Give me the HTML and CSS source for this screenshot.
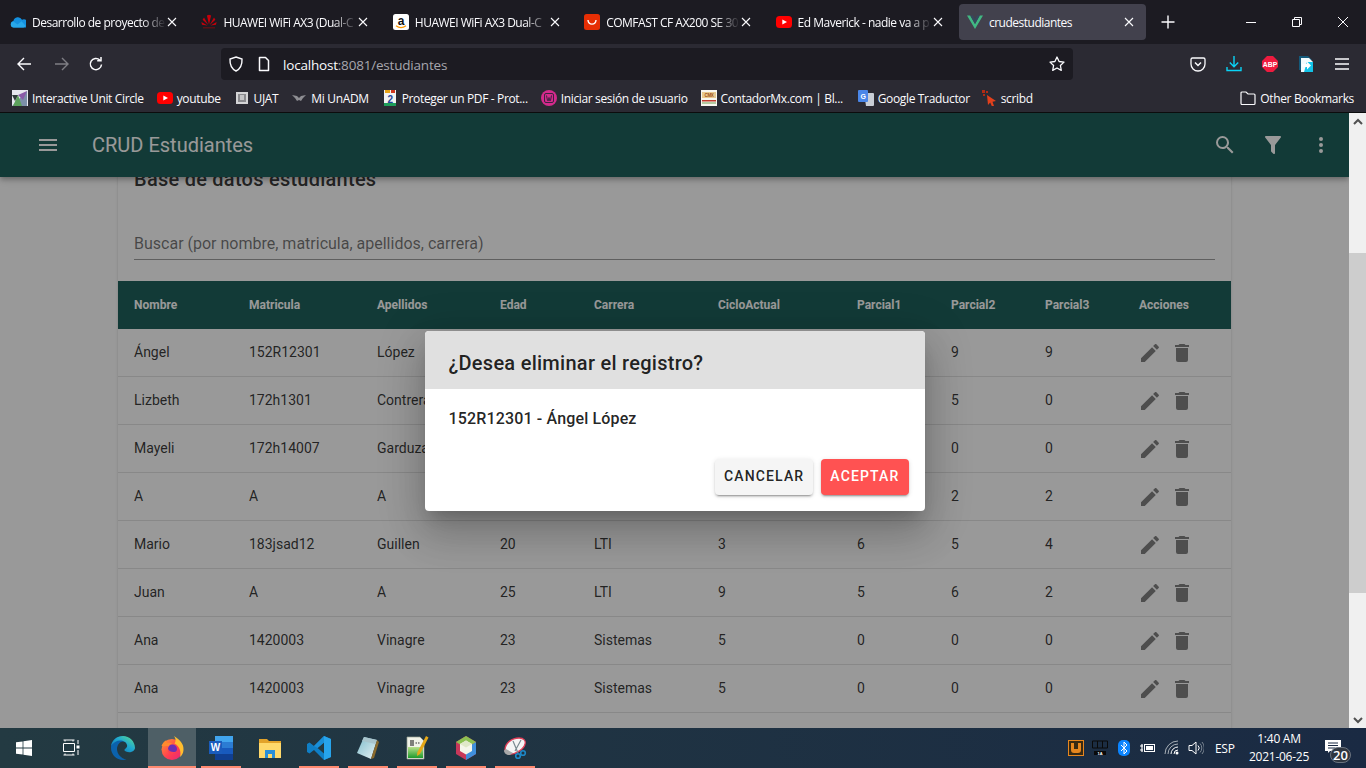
FILE: index.html
```html
<!DOCTYPE html>
<html lang="en">
<head>
  <meta charset="UTF-8" />
  <meta name="viewport" content="width=device-width, initial-scale=1.0" />
  <title>crudestudiantes</title>
  <link rel="stylesheet" href="styles.css">
</head>
<body>
  <svg class="sprites" aria-hidden="true">
    <defs>
      <linearGradient id="g-edge" x1="1" y1="0" x2="0" y2="1"><stop offset="0" stop-color="#5fe08a"/><stop offset=".45" stop-color="#1fa8d0"/><stop offset="1" stop-color="#0b62ad"/></linearGradient>
      <linearGradient id="g-fox" x1="0" y1="0" x2="1" y2="1"><stop offset="0" stop-color="#ff9a2e"/><stop offset=".55" stop-color="#ff3f50"/><stop offset="1" stop-color="#e5217f"/></linearGradient>
      <linearGradient id="g-pad" x1="0" y1="0" x2="1" y2="1"><stop offset="0" stop-color="#7fbccc"/><stop offset="1" stop-color="#e8f2f4"/></linearGradient>
      <linearGradient id="g-npp" x1="0" y1="0" x2="0" y2="1"><stop offset="0" stop-color="#b8e08a"/><stop offset="1" stop-color="#1e9a2c"/></linearGradient>
    </defs>
    <symbol id="i-menu" viewBox="0 0 24 24"><path d="M3,6H21V8H3V6M3,11H21V13H3V11M3,16H21V18H3V16Z"/></symbol>
    <symbol id="i-search" viewBox="0 0 24 24"><path d="M9.5,3A6.5,6.5 0 0,1 16,9.5C16,11.11 15.41,12.59 14.44,13.73L14.71,14H15.5L20.5,19L19,20.5L14,15.5V14.71L13.73,14.44C12.59,15.41 11.11,16 9.5,16A6.5,6.5 0 0,1 3,9.5A6.5,6.5 0 0,1 9.5,3M9.5,5C7,5 5,7 5,9.5C5,12 7,14 9.5,14C12,14 14,12 14,9.5C14,7 12,5 9.5,5Z"/></symbol>
    <symbol id="i-filter" viewBox="0 0 24 24"><path d="M14,12V19.88C14.04,20.18 13.94,20.5 13.71,20.71C13.32,21.1 12.69,21.1 12.3,20.71L10.29,18.7C10.06,18.47 9.96,18.16 10,17.87V12H9.97L4.21,4.62C3.87,4.19 3.95,3.56 4.38,3.22C4.57,3.08 4.78,3 5,3V3H19V3C19.22,3 19.43,3.08 19.62,3.22C20.05,3.56 20.13,4.19 19.79,4.62L14.03,12H14Z"/></symbol>
    <symbol id="i-dots" viewBox="0 0 24 24"><path d="M12,16A2,2 0 0,1 14,18A2,2 0 0,1 12,20A2,2 0 0,1 10,18A2,2 0 0,1 12,16M12,10A2,2 0 0,1 14,12A2,2 0 0,1 12,14A2,2 0 0,1 10,12A2,2 0 0,1 12,10M12,4A2,2 0 0,1 14,6A2,2 0 0,1 12,8A2,2 0 0,1 10,6A2,2 0 0,1 12,4Z"/></symbol>
    <symbol id="i-pencil" viewBox="0 0 24 24"><path d="M20.71,7.04C21.1,6.65 21.1,6 20.71,5.63L18.37,3.29C18,2.9 17.35,2.9 16.96,3.29L15.12,5.12L18.87,8.87M3,17.25V21H6.75L17.81,9.93L14.06,6.18L3,17.25Z"/></symbol>
    <symbol id="i-delete" viewBox="0 0 24 24"><path d="M19,4H15.5L14.5,3H9.5L8.5,4H5V6H19M6,19A2,2 0 0,0 8,21H16A2,2 0 0,0 18,19V7H6V19Z"/></symbol>
    <symbol id="i-x" viewBox="0 0 10 10"><path d="M1 1l8 8M9 1L1 9" fill="none" stroke="currentColor" stroke-width="1.1"/></symbol>
    <symbol id="i-yt" viewBox="0 0 16 16"><rect y="2" width="16" height="12" rx="3.5" fill="#f00"/><path d="M6.3 5.4v5.2L11 8z" fill="#fff"/></symbol>
  </svg>

  <div class="tabstrip">
    <div class="tab">
      <svg class="favicon" viewBox="0 0 16 16"><path d="M4 13.5a3.3 3.3 0 0 1-.6-6.500 4.600 4.600 0 0 1 8.600-1.200 3.900 3.900 0 0 1 3.800 7.700z" fill="#1490df"/><path d="M4 13.500a3 3 0 0 1-.5-6l4 3 4-3.300 4 4.600a2.600 2.600 0 0 1-2 1.700z" fill="#28a8ea"/></svg>
      <span class="tab-title">Desarrollo de proyecto de</span>
      <svg class="tab-close"><use href="#i-x"/></svg>
    </div>
    <div class="tab">
      <svg class="favicon" viewBox="0 0 16 16"><g fill="#c7000b"><path d="M8 10.500 5.900 1.500 8 .8z"/><path d="M8 10.500 10.100 1.500 8 .8z"/><path d="M7.300 11 3 3.500 1.600 5.800z"/><path d="M8.700 11 13 3.500 14.400 5.800z"/><path d="M6.500 11.500 .4 8l.6 2.700z"/><path d="M9.500 11.500 15.600 8l-.6 2.700z"/></g><rect x="2" y="13" width="12" height="1.500" fill="#5a1015"/></svg>
      <span class="tab-title">HUAWEI WiFi AX3 (Dual-C</span>
      <svg class="tab-close"><use href="#i-x"/></svg>
    </div>
    <div class="tab">
      <svg class="favicon" viewBox="0 0 16 16"><rect width="16" height="16" rx="2.500" fill="#fff"/><text x="8" y="10.500" class="amazon-a">a</text><path d="M3 11.800c3 2.200 7 2.200 10 0" fill="none" stroke="#f90" stroke-width="1.300"/></svg>
      <span class="tab-title">HUAWEI WiFi AX3 Dual-C</span>
      <svg class="tab-close"><use href="#i-x"/></svg>
    </div>
    <div class="tab">
      <svg class="favicon" viewBox="0 0 16 16"><rect width="16" height="16" rx="2.500" fill="#e62e04"/><path d="M4 6c.3 5.500 7.700 5.500 8 0" fill="none" stroke="#fff" stroke-width="1.400"/></svg>
      <span class="tab-title">COMFAST CF AX200 SE 30</span>
      <svg class="tab-close"><use href="#i-x"/></svg>
    </div>
    <div class="tab">
      <svg class="favicon"><use href="#i-yt"/></svg>
      <span class="tab-title">Ed Maverick - nadie va a p</span>
      <svg class="tab-close"><use href="#i-x"/></svg>
    </div>
    <div class="tab tab-active">
      <svg class="favicon" viewBox="0 0 16 16"><path d="M0 1.500h3.200L8 10l4.800-8.500H16L8 15z" fill="#41b883"/><path d="M3.200 1.500h2.600L8 5.400l2.200-3.900h2.600L8 10z" fill="#35495e"/></svg>
      <span class="tab-title">crudestudiantes</span>
      <svg class="tab-close"><use href="#i-x"/></svg>
    </div>
    <svg class="new-tab" viewBox="0 0 14 14"><path d="M7 .5v13M.5 7h13" fill="none" stroke="currentColor" stroke-width="1.400"/></svg>
    <div class="win-controls">
      <span class="win-btn"><svg viewBox="0 0 12 12"><path d="M1 6.500h10" stroke="currentColor" fill="none"/></svg></span>
      <span class="win-btn"><svg viewBox="0 0 12 12"><path d="M1.500 3.500h7v7h-7zM3.500 3.500v-2h7v7h-2" stroke="currentColor" fill="none"/></svg></span>
      <span class="win-btn"><svg viewBox="0 0 12 12"><path d="M1 1l10 10M11 1L1 11" stroke="currentColor" fill="none"/></svg></span>
    </div>
  </div>

  <div class="toolbar">
    <svg class="nav-icon" viewBox="0 0 16 16"><path d="M15 8H2M8 2L2 8l6 6" fill="none" stroke="currentColor" stroke-width="1.400"/></svg>
    <svg class="nav-icon nav-off" viewBox="0 0 16 16"><path d="M1 8h13M8 2l6 6-6 6" fill="none" stroke="currentColor" stroke-width="1.400"/></svg>
    <svg class="nav-icon" viewBox="0 0 16 16"><path d="M13.500 8.500A5.600 5.600 0 1 1 11.800 4M13 1v3.800H9.200" fill="none" stroke="currentColor" stroke-width="1.500"/></svg>
    <div class="urlbar">
      <svg class="url-icon" viewBox="0 0 16 16"><path d="M8 1l6 2c.3 6-1.500 9.800-6 12C3.500 12.800 1.700 9 2 3z" fill="none" stroke="currentColor" stroke-width="1.400"/></svg>
      <svg class="url-icon" viewBox="0 0 16 16"><path d="M3.500 1.500h6l3 3v10h-9z" fill="none" stroke="currentColor" stroke-width="1.500" stroke-linejoin="round"/></svg>
      <span class="url-text"><b>localhost</b>:8081/estudiantes</span>
      <svg class="url-star" viewBox="0 0 16 16"><path d="M8 1l2.100 4.500 4.900.6-3.600 3.400.9 4.900L8 12l-4.300 2.400.9-4.900L1 6.100l4.900-.6z" fill="none" stroke="currentColor" stroke-width="1.300" stroke-linejoin="round"/></svg>
    </div>
    <div class="tool-icons">
      <svg viewBox="0 0 16 16"><path d="M2.500 2h11A1.500 1.500 0 0 1 15 3.500V8A7 7 0 0 1 1 8V3.500A1.500 1.500 0 0 1 2.500 2z" fill="none" stroke="#fbfbfe" stroke-width="1.300"/><path d="M5 6.500l3 3 3-3" fill="none" stroke="#fbfbfe" stroke-width="1.500"/></svg>
      <svg viewBox="0 0 16 16"><path d="M8 0v10.500M3.800 6.500L8 10.700l4.200-4.200M1 11v3.500h14V11" fill="none" stroke="#0ad3f5" stroke-width="1.400"/></svg>
      <svg viewBox="0 0 16 16"><path d="M5 0h6l5 5v6l-5 5H5l-5-5V5z" fill="#ee1b3f"/><text x="8" y="10.500" class="abp">ABP</text></svg>
      <svg viewBox="0 0 16 16"><path d="M1 0h9l4 4H3v10H1z" fill="#14597a"/><path d="M3 2h8l4 4v10H3z" fill="#f4fbfd"/><path d="M8 16l7-6v6z" fill="#12c3e8"/><path d="M9 6h6v10H6z" fill="#12c3e8"/><path d="M4 8h5V5.500L13 9.500l-4 4V11H4z" fill="#fff"/></svg>
      <svg viewBox="0 0 16 16"><path d="M1 3h14M1 8h14M1 13h14" fill="none" stroke="#fbfbfe" stroke-width="1.400"/></svg>
    </div>
  </div>

  <div class="bookmarks">
    <span class="bm">
      <svg viewBox="0 0 16 16"><rect width="16" height="16" fill="#e6e6ee"/><path d="M0 16L15 1v15z" fill="#7c8fa8"/><path d="M1 16l5-11 4 11z" fill="#5ca15c"/><path d="M6 5l9-4-4 9z" fill="#8a5aa8"/><path d="M0 5l6 0-3 6z" fill="#2f3a3a"/></svg>
      Interactive Unit Circle
    </span>
    <span class="bm"><svg><use href="#i-yt"/></svg>youtube</span>
    <span class="bm">
      <svg viewBox="0 0 16 16"><rect x="2" y="2" width="12" height="12" fill="#d4d4d6"/><rect x="4" y="4" width="8" height="8" fill="#8a8a8e"/><rect x="6" y="5" width="4" height="5" fill="#c4c4c6"/></svg>
      UJAT
    </span>
    <span class="bm">
      <svg viewBox="0 0 16 16"><path d="M1 5l5 1 2 2 2-2 5-1-3 3-2 3-2-1-2 1-2-3z" fill="#8d8d92"/></svg>
      Mi UnADM
    </span>
    <span class="bm">
      <svg viewBox="0 0 16 16"><path d="M2 0h12v16H2z" fill="#f2f2f2"/><path d="M3 0h5v3H3z" fill="#e8a317"/><path d="M9 0h4v3H9z" fill="#d0381f"/><path d="M2 13h12v3H2z" fill="#1e9e5a"/><text x="8" y="12.500" class="num2">2</text></svg>
      Proteger un PDF - Prot...
    </span>
    <span class="bm">
      <svg viewBox="0 0 16 16"><circle cx="8" cy="8" r="8" fill="#d42a8c"/><rect x="3.500" y="3.500" width="9" height="9" rx="1.500" fill="none" stroke="#3c2340"/><path d="M5.500 5.500l1 5h1l.5-3 .5 3h1l1-5" fill="none" stroke="#3c2340"/></svg>
      Iniciar sesión de usuario
    </span>
    <span class="bm">
      <svg viewBox="0 0 16 16"><rect width="16" height="16" fill="#f8f6ef"/><rect x="1" y="2" width="14" height="6" fill="#e9c98d"/><text x="8" y="7" class="cmx">CMX</text><rect x="1" y="10" width="14" height="1.500" fill="#c0392b"/><rect x="1" y="12.500" width="14" height="1" fill="#6f9e55"/></svg>
      ContadorMx.com | Bl...
    </span>
    <span class="bm bm-google">
      <svg viewBox="0 0 16 16"><path d="M6 3h9a1 1 0 0 1 1 1v11a1 1 0 0 1-1 1H8z" fill="#c9ced6"/><rect width="10" height="12" rx="1" fill="#4a86e8"/><text x="5" y="9" class="g">G</text></svg>
      Google Traductor
    </span>
    <span class="bm">
      <svg viewBox="0 0 16 16"><path d="M6 5l9 6-3.500.8L13 16l-2 .5-1.800-4L7 15z" fill="#e2401c"/><path d="M1 0h3v3H1zM5 1h2v2H5zM2 4h2v2H2z" fill="#b22a14"/></svg>
      scribd
    </span>
    <span class="bm bm-other">
      <svg viewBox="0 0 16 16"><path d="M1 13.500V3a1 1 0 0 1 1-1h4l2 2h6a1 1 0 0 1 1 1v8.500a1 1 0 0 1-1 1H2a1 1 0 0 1-1-1z" fill="none" stroke="#fbfbfe" stroke-width="1.200"/></svg>
      Other Bookmarks
    </span>
  </div>

  <div class="viewport">
    <div class="app">
      <header class="appbar">
        <svg class="appbar-icon"><use href="#i-menu"/></svg>
        <div class="appbar-title">CRUD Estudiantes</div>
        <div class="appbar-actions">
          <svg class="appbar-icon"><use href="#i-search"/></svg>
          <svg class="appbar-icon"><use href="#i-filter"/></svg>
          <svg class="appbar-icon"><use href="#i-dots"/></svg>
        </div>
      </header>

      <main class="card">
        <h2 class="card-title">Base de datos estudiantes</h2>
        <div class="search-field">Buscar (por nombre, matricula, apellidos, carrera)</div>
        <table class="data-table">
          <thead>
            <tr><th>Nombre</th><th>Matricula</th><th>Apellidos</th><th>Edad</th><th>Carrera</th><th>CicloActual</th><th>Parcial1</th><th>Parcial2</th><th>Parcial3</th><th>Acciones</th></tr>
          </thead>
          <tbody>
            <tr><td>Ángel</td><td>152R12301</td><td>López</td><td></td><td></td><td></td><td></td><td>9</td><td>9</td><td class="row-actions"><svg><use href="#i-pencil"/></svg><svg><use href="#i-delete"/></svg></td></tr>
            <tr><td>Lizbeth</td><td>172h1301</td><td>Contreras</td><td></td><td></td><td></td><td></td><td>5</td><td>0</td><td class="row-actions"><svg><use href="#i-pencil"/></svg><svg><use href="#i-delete"/></svg></td></tr>
            <tr><td>Mayeli</td><td>172h14007</td><td>Garduza</td><td></td><td></td><td></td><td></td><td>0</td><td>0</td><td class="row-actions"><svg><use href="#i-pencil"/></svg><svg><use href="#i-delete"/></svg></td></tr>
            <tr><td>A</td><td>A</td><td>A</td><td></td><td></td><td></td><td></td><td>2</td><td>2</td><td class="row-actions"><svg><use href="#i-pencil"/></svg><svg><use href="#i-delete"/></svg></td></tr>
            <tr><td>Mario</td><td>183jsad12</td><td>Guillen</td><td>20</td><td>LTI</td><td>3</td><td>6</td><td>5</td><td>4</td><td class="row-actions"><svg><use href="#i-pencil"/></svg><svg><use href="#i-delete"/></svg></td></tr>
            <tr><td>Juan</td><td>A</td><td>A</td><td>25</td><td>LTI</td><td>9</td><td>5</td><td>6</td><td>2</td><td class="row-actions"><svg><use href="#i-pencil"/></svg><svg><use href="#i-delete"/></svg></td></tr>
            <tr><td>Ana</td><td>1420003</td><td>Vinagre</td><td>23</td><td>Sistemas</td><td>5</td><td>0</td><td>0</td><td>0</td><td class="row-actions"><svg><use href="#i-pencil"/></svg><svg><use href="#i-delete"/></svg></td></tr>
            <tr><td>Ana</td><td>1420003</td><td>Vinagre</td><td>23</td><td>Sistemas</td><td>5</td><td>0</td><td>0</td><td>0</td><td class="row-actions"><svg><use href="#i-pencil"/></svg><svg><use href="#i-delete"/></svg></td></tr>
          </tbody>
        </table>
      </main>

      <div class="overlay">
        <div class="dialog">
          <div class="dialog-head">¿Desea eliminar el registro?</div>
          <div class="dialog-body">152R12301 - Ángel López</div>
          <div class="dialog-actions">
            <button class="btn btn-cancel">Cancelar</button>
            <button class="btn btn-ok">Aceptar</button>
          </div>
        </div>
      </div>
    </div>

    <div class="scrollbar">
      <div class="sb-btn"><svg viewBox="0 0 12 12"><path d="M2 8l4-4 4 4" fill="none" stroke="#505050" stroke-width="2"/></svg></div>
      <div class="sb-track"><div class="sb-thumb"></div></div>
      <div class="sb-btn"><svg viewBox="0 0 12 12"><path d="M2 4l4 4 4-4" fill="none" stroke="#505050" stroke-width="2"/></svg></div>
    </div>
  </div>

  <footer class="taskbar">
    <div class="task-start"><svg viewBox="0 0 16 16"><path d="M0 2.300l6.600-.9v6.200H0zM7.400 1.300L16 0v7.600H7.400zM0 8.400h6.600v6.200L0 13.700zM7.400 8.400H16V16l-8.600-1.300z" fill="#fff"/></svg></div>
    <div class="task-view"><svg viewBox="0 0 17 18"><path d="M.5 1h11M.5 4.500h11v8H.5zM.5 16h11" fill="none" stroke="#fff"/><path d="M2 1v1.500M10 1v1.500M2 14.500V16M10 14.500V16" stroke="#fff"/><rect x="13.500" y="6.500" width="3" height="3" fill="#fff"/><path d="M15 1v4M15 11v5" stroke="#fff"/></svg></div>
    <div class="task-app task-edge"><svg viewBox="0 0 24 24"><path d="M12 0A12 12 0 0 0 0 12c0 6.500 5.500 12 12 12 1.500 0 2.500-.2 3.500-.5C10 22.500 6 18 6 13c0-4 3-7.500 6-7.500 2 0 3.500 1 4 3C18 5 16 .4 12 0z" fill="#0b62ad"/><path d="M12 0c-6 0-11 4-12 10 2-3.500 6-5.500 9-5.500 3.500 0 6.500 1.500 7 4.500 1 3-3 3.500-2.500 5.500 3 3 10 2 10.500-2.500C24 5.500 18.500 0 12 0z" fill="url(#g-edge)"/></svg></div>
    <div class="task-app task-active task-open"><svg viewBox="0 0 24 24"><circle cx="12" cy="13.500" r="10.500" fill="url(#g-fox)"/><path d="M14 0c6 4 10 8 9.500 14-.2 3-1.500 5.500-3.500 7 1.500-5.500-.5-11-5.500-13.500C16 5 16 2.500 14 0z" fill="#ffbd2e"/><path d="M1.500 10c1-3 3-5 5-6-.5 1.500 0 2.500 1 3 1.500-.5 3.500-.5 5 .5-1.500 0-3 1-3.500 2.500-2 0-5 .5-7.500 0z" fill="#ff8a2e"/><circle cx="12.500" cy="13" r="4.500" fill="#6b2fb5"/><path d="M8 13c-.5 3 2 5.500 5 5 2-.3 3.500-1.500 4-3.500-1 1-2 1.500-3.500 1.500-2.500 0-4.500-1-5.500-3z" fill="#ff3f50"/></svg></div>
    <div class="task-app task-open"><svg viewBox="0 0 24 24"><rect x="6" y="0" width="18" height="6" fill="#41a5ee"/><rect x="6" y="6" width="18" height="6" fill="#2b7cd3"/><rect x="6" y="12" width="18" height="6" fill="#185abd"/><rect x="6" y="18" width="18" height="6" fill="#103f91"/><rect y="5" width="13" height="13" fill="#1a5cbc"/><text x="6.500" y="15" class="word-w">W</text></svg></div>
    <div class="task-app"><svg viewBox="0 0 24 24"><path d="M1 3h8l2 2h12v17H1z" fill="#e3a32a"/><path d="M1 7h22v15H1z" fill="#ffd96b"/><path d="M7 14h10v8h-3v-4h-4v4H7z" fill="#2a8fd8"/></svg></div>
    <div class="task-app task-open"><svg viewBox="0 0 24 24"><path d="M17 0l7 3v18l-7 3L7 14l-4.500 3.500L0 16V8l2.500-1.500L7 10z" fill="#0f7fc6"/><path d="M17 6.500L10.500 12l6.500 5.500z" fill="#233a42"/><path d="M17 0l7 3v18l-7 3z" fill="#27a4ec"/><path d="M17 6.500V0L7 10l3.500 2z" fill="#1a8fd8"/></svg></div>
    <div class="task-app task-open"><svg viewBox="0 0 24 24"><path d="M8 1l13 3-6 19L1 17z" fill="url(#g-pad)"/><path d="M8 1l13 3-1.500 4L6 5z" fill="#a8c4cc"/><path d="M21 4l2 2-5 16-3 1z" fill="#8a6a2c"/></svg></div>
    <div class="task-app task-open"><svg viewBox="0 0 24 24"><path d="M2 1h13l4 4v18H2z" fill="#f0f2e8" stroke="#9aa090" stroke-width=".7"/><path d="M3 11h15v11H3z" fill="url(#g-npp)"/><path d="M6 4v6M8 4v6M10.500 7h1.500M13 7h1.500" stroke="#333" stroke-width="1.200"/><path d="M21 0l2.500 1.500L15 18l-3 2 .3-3.500z" fill="#e6a817"/></svg></div>
    <div class="task-app task-open"><svg viewBox="0 0 24 24"><path d="M12 0l10 6v12l-10 6L2 18V6z" fill="#c8385a"/><path d="M12 12l10-6v12l-10 6z" fill="#3f8fdc"/><path d="M2 6l10-6 10 6-10 6z" fill="#8cc152"/><path d="M12 4.500l6 3.500v7l-6 3.500L6 15V8z" fill="#f4f6ea"/><path d="M12 4.500l6 3.500-6 3.500L6 8z" fill="#dfe8c8"/></svg></div>
    <div class="task-app task-open"><svg viewBox="0 0 24 24"><path d="M2 14C2 7 9 2 16 2c5 0 7 3 6 6-1 5-9 10-14 10-2 0-6-.5-6-4z" fill="#f5f5f5" stroke="#e0405a" stroke-width="1.300"/><path d="M1 14.500c0 3 3 5 6 4.500l3-2-7-4z" fill="#a8a8a8"/><path d="M10 5l5 12M18 4l-6 11" stroke="#7a8a90" stroke-width="1.200"/><circle cx="15" cy="20" r="2.300" fill="none" stroke="#1e88c8" stroke-width="1.600"/><circle cx="20" cy="17" r="2.300" fill="none" stroke="#1e88c8" stroke-width="1.600"/></svg></div>

    <div class="tray">
      <svg class="tray-icon" viewBox="0 0 16 16"><rect x=".5" y=".5" width="15" height="15" fill="#3a2a12" stroke="#e8871e"/><path d="M3 3v7a3 3 0 0 0 3 3h4a3 3 0 0 0 3-3V3h-3v6H6V3z" fill="#e8871e"/></svg>
      <svg class="tray-icon" viewBox="0 0 16 16"><path d="M.5 1h15v7H.5zM5.500 1v7M10.500 1v7" fill="none" stroke="#0a0a0a"/><path d="M2 11h12v4H2z" fill="#0a0a0a"/><text x="8" y="14.700" class="meter">1A</text></svg>
      <svg class="tray-icon tray-bt" viewBox="0 0 12 16"><rect width="12" height="16" rx="5" fill="#0a84ff"/><path d="M3 5l6 6-3 3V2l3 3-6 6" fill="none" stroke="#fff"/></svg>
      <svg class="tray-icon" viewBox="0 0 16 16"><rect x="4.500" y="4.500" width="10" height="7" fill="none" stroke="#fff"/><rect x="6" y="6" width="7" height="4" fill="#fff"/><path d="M0 6h3M0 10h3M2 4v8" stroke="#fff" stroke-width="1.200"/></svg>
      <svg class="tray-icon" viewBox="0 0 16 16"><path d="M1 14A13 13 0 0 1 14 1M4 14A10 10 0 0 1 14 4" fill="none" stroke="#a8b0b8"/><path d="M7 14a7 7 0 0 1 7-7M10 14a4 4 0 0 1 4-4" fill="none" stroke="#fff"/><circle cx="13" cy="13" r="1.500" fill="#fff"/></svg>
      <svg class="tray-icon" viewBox="0 0 16 16"><path d="M1 5.500h3L8 2v12l-4-3.500H1z" fill="none" stroke="#fff"/><path d="M10 5.500a3.500 3.500 0 0 1 0 5" fill="none" stroke="#fff"/><path d="M12 3.500a6.500 6.500 0 0 1 0 9M14 2a9 9 0 0 1 0 12" fill="none" stroke="#7d8894"/></svg>
      <span class="tray-lang">ESP</span>
      <div class="tray-clock"><span>1:40 AM</span><span>2021-06-25</span></div>
      <div class="tray-notify">
        <svg viewBox="0 0 16 13"><path d="M0 0h16v11H5l-2 2v-2H0z" fill="#fff"/><path d="M3 3h10M3 5.500h10M3 8h7" stroke="#1b2b44"/></svg>
        <span class="notify-badge">20</span>
      </div>
    </div>
  </footer>
</body>
</html>
```

FILE: styles.css
```css
* {
  box-sizing: border-box;
}

html, body {
  margin: 0;
  height: 100%;
}

body {
  display: flex;
  flex-direction: column;
  overflow: hidden;
  font-family: "Open Sans", "Noto Sans", sans-serif;
  background-color: #1c1b22;
}

.sprites {
  position: absolute;
  width: 0;
  height: 0;
}

/* browser tabs */
.tabstrip {
  display: flex;
  align-items: center;
  height: 44px;
  flex: none;
  padding-left: 2px;
  background-color: #1c1b22;
  color: #fbfbfe;
}

.tab {
  display: flex;
  align-items: center;
  width: 187.4px;
  height: 36px;
  margin-right: 4px;
  padding: 0 8px;
  border-radius: 4px;
  flex: none;
}

.tab-active {
  background-color: #42414d;
}

.favicon {
  width: 16px;
  height: 16px;
  margin-right: 6px;
  flex: none;
}

.tab-title {
  width: 134px;
  font-size: 12px;
  letter-spacing: -0.5px;
  white-space: nowrap;
  -webkit-mask-image: linear-gradient(to right, #000 82%, transparent);
  mask-image: linear-gradient(to right, #000 82%, transparent);
}

.tab-active .tab-title {
  -webkit-mask-image: none;
  mask-image: none;
}

.tab-close {
  width: 10px;
  height: 10px;
  margin-left: 1px;
  flex: none;
}

.new-tab {
  width: 14px;
  height: 14px;
  margin-left: 11px;
  flex: none;
}

.win-controls {
  display: flex;
  margin-left: auto;
}

.win-btn {
  display: flex;
  justify-content: center;
  align-items: center;
  width: 46px;
  height: 44px;
}

.win-btn svg {
  width: 12px;
  height: 12px;
}

/* browser toolbar */
.toolbar {
  display: flex;
  align-items: center;
  height: 40px;
  flex: none;
  padding-left: 16px;
  background-color: #2b2a33;
  color: #fbfbfe;
}

.nav-icon {
  width: 16px;
  height: 16px;
  margin-right: 22px;
  flex: none;
}

.nav-off {
  margin-right: 18px;
  opacity: 0.4;
}

.urlbar {
  display: flex;
  align-items: center;
  width: 852px;
  height: 32px;
  margin-left: 95px;
  padding: 0 8px 0 7px;
  border-radius: 4px;
  background-color: #1c1b22;
}

.url-icon {
  width: 16px;
  height: 16px;
  margin-right: 12px;
  flex: none;
}

.url-icon + .url-icon {
  margin-right: 11px;
}

.url-text {
  padding-top: 1px;
  font-size: 13.5px;
  letter-spacing: -0.2px;
  color: #a7a6ad;
}

.url-text b {
  font-weight: 400;
  color: #fbfbfe;
}

.url-star {
  width: 16px;
  height: 16px;
  margin-left: auto;
}

.tool-icons {
  display: flex;
  align-items: center;
  gap: 20px;
  margin-left: 117px;
}

.tool-icons svg {
  width: 16px;
  height: 16px;
}

.abp {
  font: 700 6.8px "Liberation Sans", sans-serif;
  text-anchor: middle;
  fill: #fff;
}

/* bookmarks bar */
.bookmarks {
  display: flex;
  align-items: center;
  gap: 13px;
  height: 29px;
  flex: none;
  padding: 0 12px;
  background-color: #2b2a33;
  border-bottom: 1px solid #0c0c0d;
  color: #fbfbfe;
  font-size: 12px;
  letter-spacing: -0.35px;
}

.bm {
  display: flex;
  align-items: center;
  gap: 4px;
  white-space: nowrap;
}

.bm svg {
  width: 16px;
  height: 16px;
  flex: none;
}

.bm-google {
  margin-left: 2px;
  margin-right: -2px;
}

.bm-other {
  margin-left: auto;
}

.num2 {
  font: 700 10px "Liberation Sans", sans-serif;
  text-anchor: middle;
  fill: #22409a;
}

.cmx {
  font: 700 4.5px "Liberation Sans", sans-serif;
  text-anchor: middle;
  fill: #a0521c;
}

.g {
  font: 700 7px "Liberation Sans", sans-serif;
  text-anchor: middle;
  fill: #fff;
}

.amazon-a {
  font: 700 12px "Liberation Sans", sans-serif;
  text-anchor: middle;
  fill: #111;
}

/* page */
.viewport {
  display: flex;
  height: 615px;
  flex: none;
}

.app {
  position: relative;
  flex: 1;
  min-width: 0;
  overflow: hidden;
  background-color: #fff;
  font-family: Roboto, sans-serif;
}

.appbar {
  position: relative;
  z-index: 2;
  display: flex;
  align-items: center;
  height: 64px;
  padding: 0 16px 0 36px;
  background-color: #06514a;
  color: #fff;
  box-shadow: 0 2px 4px -1px rgba(0,0,0,.2), 0 4px 5px 0 rgba(0,0,0,.14), 0 1px 10px 0 rgba(0,0,0,.12);
}

.appbar-icon {
  width: 24px;
  height: 24px;
  fill: #fff;
  flex: none;
}

.appbar-title {
  margin-left: 32px;
  font-size: 20px;
  line-height: 64px;
}

.appbar-actions {
  display: flex;
  gap: 24px;
  margin-left: auto;
}

.card {
  width: 1113px;
  height: 600px;
  margin: -30px 0 0 118px;
  background-color: #fff;
  box-shadow: 0 2px 1px -1px rgba(0,0,0,.2), 0 1px 1px 0 rgba(0,0,0,.14), 0 1px 3px 0 rgba(0,0,0,.12);
}

.card-title {
  margin: 0;
  padding: 16px 16px 0;
  font-size: 20px;
  font-weight: 500;
  line-height: 32px;
  letter-spacing: 0.25px;
  color: rgba(0,0,0,.87);
}

.search-field {
  height: 30px;
  margin: 35px 16px 21px;
  padding-top: 2px;
  border-bottom: 1px solid rgba(0,0,0,.42);
  font-size: 16px;
  line-height: 24px;
  color: rgba(0,0,0,.6);
}

.data-table {
  width: 100%;
  border-collapse: separate;
  border-spacing: 0;
  table-layout: fixed;
  color: rgba(0,0,0,.87);
}

.data-table th {
  height: 48px;
  padding: 0 16px;
  background-color: #06514a;
  color: #fff;
  font-size: 12px;
  font-weight: 700;
  text-align: left;
}

.data-table td {
  height: 48px;
  padding: 0 16px 2px;
  border-bottom: 1px solid rgba(0,0,0,.12);
  font-size: 14px;
  white-space: nowrap;
}

.data-table th:nth-child(1) { width: 115px; }
.data-table th:nth-child(2) { width: 128px; }
.data-table th:nth-child(3) { width: 123px; }
.data-table th:nth-child(4) { width: 94px; }
.data-table th:nth-child(5) { width: 124px; }
.data-table th:nth-child(6) { width: 139px; }
.data-table th:nth-child(7) { width: 94px; }
.data-table th:nth-child(8) { width: 94px; }
.data-table th:nth-child(9) { width: 94px; }

.data-table td.row-actions {
  padding: 1px 0 0 15px;
  line-height: 0;
}

.row-actions svg {
  width: 24px;
  height: 24px;
  margin-right: 8px;
  fill: rgba(0,0,0,.54);
}

/* delete dialog */
.overlay {
  position: absolute;
  inset: 0;
  z-index: 5;
  display: flex;
  justify-content: center;
  align-items: center;
  background-color: rgba(33,33,33,.46);
}

.dialog {
  width: 500px;
  border-radius: 4px;
  overflow: hidden;
  background-color: #fff;
  box-shadow: 0 11px 15px -7px rgba(0,0,0,.2), 0 24px 38px 3px rgba(0,0,0,.14), 0 9px 46px 8px rgba(0,0,0,.12);
}

.dialog-head {
  height: 58px;
  padding: 0 24px;
  background-color: #e0e0e0;
  color: rgba(0,0,0,.87);
  font-size: 20px;
  font-weight: 500;
  line-height: 64px;
  letter-spacing: 0.27px;
}

.dialog-body {
  padding: 20px 24px 0;
  color: rgba(0,0,0,.87);
  font-size: 16px;
  font-weight: 500;
  line-height: 20px;
  letter-spacing: 0.15px;
}

.dialog-actions {
  display: flex;
  justify-content: flex-end;
  gap: 8px;
  padding: 30px 16px 16px;
}

.btn {
  height: 36px;
  padding: 0 9px 1px;
  border: none;
  border-radius: 4px;
  font-family: inherit;
  font-size: 14px;
  font-weight: 500;
  letter-spacing: 1.15px;
  text-transform: uppercase;
  box-shadow: 0 3px 1px -2px rgba(0,0,0,.2), 0 2px 2px 0 rgba(0,0,0,.14), 0 1px 5px 0 rgba(0,0,0,.12);
}

.btn-cancel {
  background-color: #f5f5f5;
  color: rgba(0,0,0,.87);
}

.btn-ok {
  background-color: #ff5252;
  color: #fff;
}

/* page scrollbar */
.scrollbar {
  display: flex;
  flex-direction: column;
  width: 17px;
  flex: none;
  background-color: #f0f0f0;
}

.sb-btn {
  display: flex;
  justify-content: center;
  align-items: center;
  height: 17px;
  flex: none;
}

.sb-btn svg {
  width: 12px;
  height: 12px;
}

.sb-track {
  display: flex;
  flex: 1;
  padding: 123px 0 118px;
}

.sb-thumb {
  flex: 1;
  background-color: #cdcdcd;
}

/* windows taskbar */
.taskbar {
  display: flex;
  align-items: stretch;
  height: 40px;
  flex: none;
  background: linear-gradient(to right, #233a42, #1a2a43);
  color: #fff;
}

.task-start {
  display: flex;
  justify-content: center;
  align-items: center;
  width: 48px;
  flex: none;
}

.task-start svg {
  width: 16px;
  height: 16px;
}

.task-view {
  display: flex;
  align-items: center;
  width: 50.5px;
  padding-left: 15px;
  flex: none;
}

.task-view svg {
  width: 17px;
  height: 18px;
}

.task-app {
  display: flex;
  justify-content: center;
  align-items: center;
  width: 40px;
  margin: 0 4.5px;
  padding-top: 2px;
  flex: none;
  border-bottom: 2px solid transparent;
}

.task-app svg {
  width: 24px;
  height: 24px;
}

.task-open {
  border-bottom-color: #ff8a70;
}

.task-active {
  width: 48px;
  margin: 0 0.5px;
  background-color: #4e5f66;
}

.word-w {
  font: 700 10px "Liberation Sans", sans-serif;
  text-anchor: middle;
  fill: #fff;
}

.tray {
  display: flex;
  align-items: center;
  margin-left: auto;
  padding-right: 25px;
}

.tray-icon {
  width: 16px;
  height: 16px;
  margin-right: 8px;
  flex: none;
}

.tray-bt {
  width: 12px;
  margin: 0 10px 0 2px;
}

.meter {
  font: 700 4px "Liberation Sans", sans-serif;
  text-anchor: middle;
  fill: #fff;
}

.tray-lang {
  width: 18px;
  margin-left: 3px;
  font-size: 12px;
  letter-spacing: -0.3px;
}

.tray-clock {
  display: flex;
  flex-direction: column;
  align-items: center;
  gap: 2px;
  width: 72px;
  margin-left: 10px;
  font-size: 12px;
  line-height: 16px;
  letter-spacing: -0.25px;
}

.tray-notify {
  position: relative;
  width: 16px;
  height: 13px;
  margin: -4px 0 0 10px;
}

.tray-notify svg {
  display: block;
  width: 16px;
  height: 13px;
}

.notify-badge {
  position: absolute;
  left: 5px;
  top: 7px;
  width: 21px;
  height: 16px;
  border: 1px solid #6b7480;
  border-radius: 8px;
  background-color: #2f3640;
  font-size: 13px;
  font-weight: 600;
  line-height: 14px;
  text-align: center;
}
```
